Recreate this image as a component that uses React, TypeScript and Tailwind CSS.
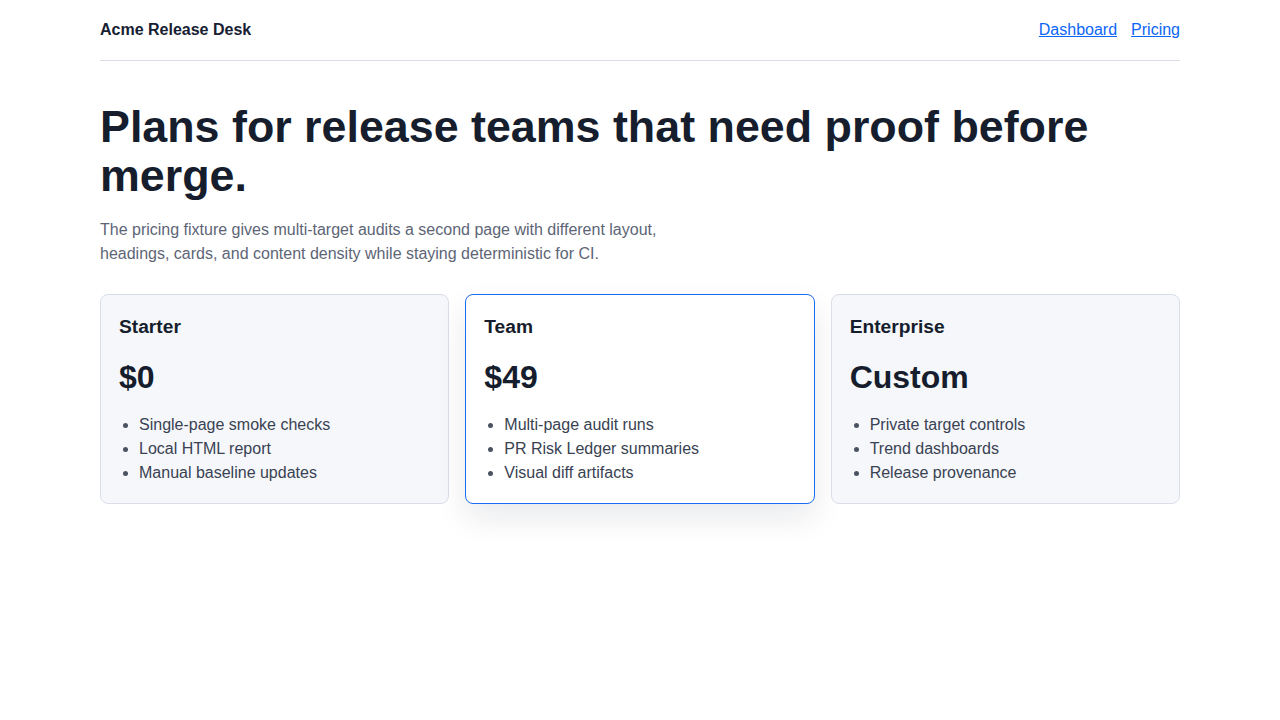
const plans = [
  {
    name: 'Starter',
    price: '$0',
    features: ['Single-page smoke checks', 'Local HTML report', 'Manual baseline updates'],
  },
  {
    name: 'Team',
    price: '$49',
    features: ['Multi-page audit runs', 'PR Risk Ledger summaries', 'Visual diff artifacts'],
    featured: true,
  },
  {
    name: 'Enterprise',
    price: 'Custom',
    features: ['Private target controls', 'Trend dashboards', 'Release provenance'],
  },
]

export default function App() {
  return (
    <div className="min-h-screen bg-white text-[#172033] font-['Liberation_Sans',Arial,sans-serif]">
      <div className="w-[1080px] mx-auto">
        <header className="h-[61px] flex items-center justify-between border-b border-[#d9dee7]">
          <span className="text-base leading-6 font-bold">Acme Release Desk</span>
          <nav className="flex gap-[14px] text-base leading-6">
            <a href="#" className="text-[#0b66f5] underline">Dashboard</a>
            <a href="#" className="text-[#0b66f5] underline">Pricing</a>
          </nav>
        </header>

        <main>
          <h1 className="mt-[41px] text-[44.8px] leading-[1.1] font-bold text-[#161d2d]">
            Plans for release teams that need proof before merge.
          </h1>
          <p className="mt-[17px] max-w-[600px] text-base leading-6 text-[#5d6576]">
            The pricing fixture gives multi-target audits a second page with different layout, headings, cards, and content density while staying deterministic for CI.
          </p>

          <div className="mt-[28px] grid grid-cols-3 gap-4">
            {plans.map(plan => (
              <div
                key={plan.name}
                className={
                  plan.featured
                    ? 'rounded-lg border border-[#1a6cf2] bg-white px-[18px] pt-[19px] pb-[18px] shadow-[0_14px_32px_rgba(15,23,42,0.09)]'
                    : 'rounded-lg border border-[#d9dee8] bg-[#f5f7fb] px-[18px] pt-[19px] pb-[18px]'
                }
              >
                <h2 className="text-[19.2px] leading-[26px] font-bold text-[#161d2d]">{plan.name}</h2>
                <div className="mt-[17px] text-[32px] leading-10 font-bold text-[#161d2d]">{plan.price}</div>
                <ul className="mt-4 list-disc pl-5 text-base leading-6 text-[#394252] marker:text-[#4b5363]">
                  {plan.features.map(f => (
                    <li key={f}>{f}</li>
                  ))}
                </ul>
              </div>
            ))}
          </div>
        </main>
      </div>
    </div>
  )
}
